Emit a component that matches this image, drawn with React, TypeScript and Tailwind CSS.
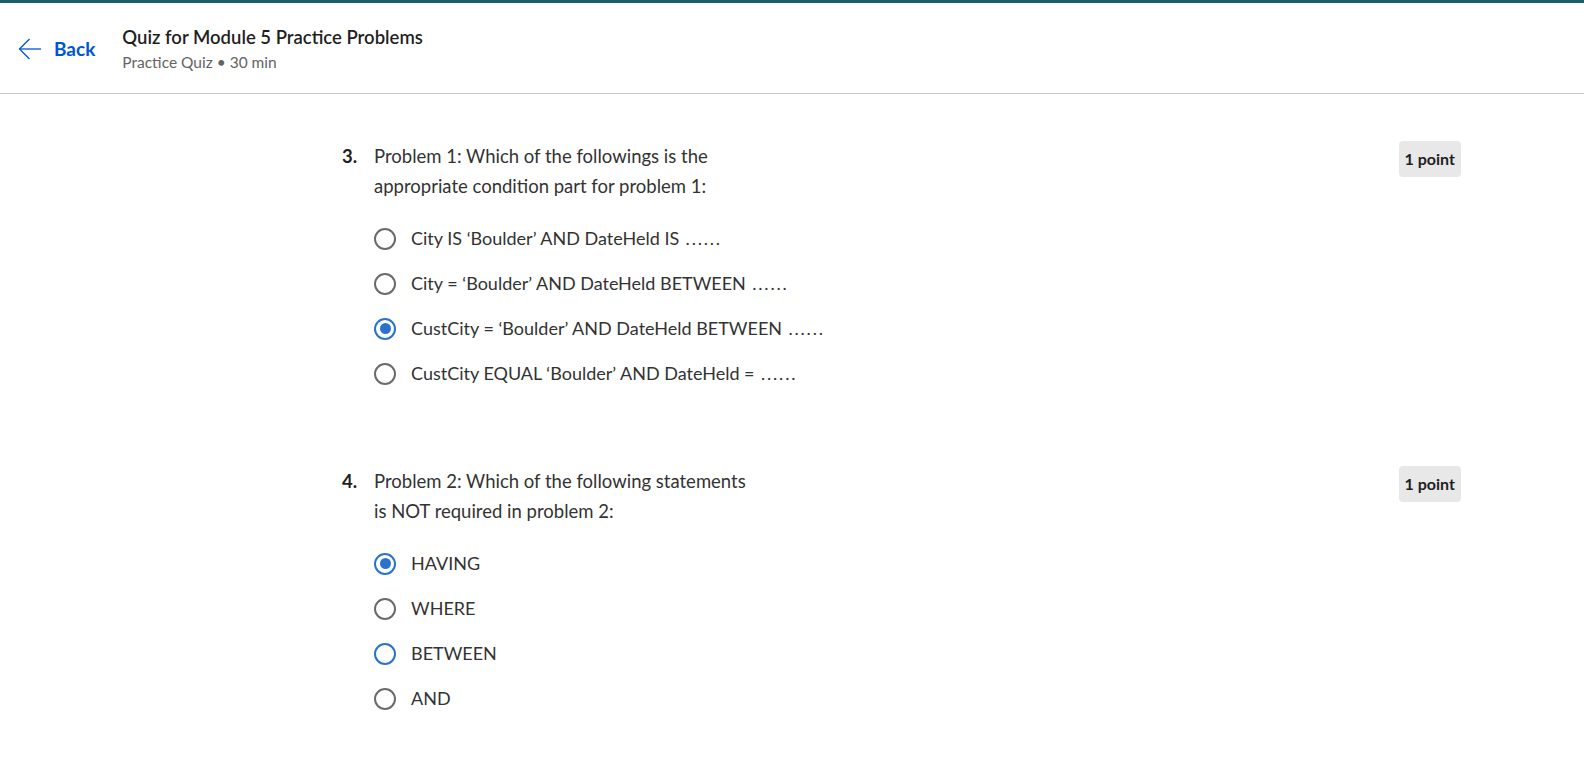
import React from 'react';

const Radio = ({ state }: { state: 'off' | 'on' | 'focus' }) => {
  if (state === 'on') {
    return (
      <span className="w-[22px] h-[22px] rounded-full border-2 border-[#2a73cc] flex items-center justify-center shrink-0">
        <span className="w-[11px] h-[11px] rounded-full bg-[#2a73cc]"></span>
      </span>
    );
  }
  return (
    <span
      className={
        state === 'focus'
          ? 'w-[22px] h-[22px] rounded-full border-2 border-[#2a73cc] shrink-0'
          : 'w-[22px] h-[22px] rounded-full border-2 border-[#6b6b6b] shrink-0'
      }
    ></span>
  );
};

type Opt = { label: string; dots?: boolean; state: 'off' | 'on' | 'focus' };

const Question = ({ number, lines, options }: { number: string; lines: string[]; options: Opt[] }) => (
  <div className="flex justify-between">
    <div>
      <div className="flex text-[18.5px] leading-[30px] text-[#333333]">
        <span className="w-[32px] font-bold text-[#1f1f1f]">{number}</span>
        <p>
          {lines[0]}
          <br />
          {lines[1]}
        </p>
      </div>
      <div className="mt-[15px] pl-[32px]">
        {options.map((opt, i) => (
          <label key={i} className="h-[45px] flex items-center gap-[15px] text-[18px] text-[#333333]">
            <Radio state={opt.state} />
            <span>
              {opt.label}
              {opt.dots && <span className="tracking-[1.8px]"> ......</span>}
            </span>
          </label>
        ))}
      </div>
    </div>
    <div>
      <span className="inline-flex items-center h-[36px] px-[6px] rounded-[4px] bg-[#e8e8e8] text-[16px] font-bold text-[#1f1f1f]">
        1 point
      </span>
    </div>
  </div>
);

export default function App() {
  return (
    <div className="min-h-screen bg-white" style={{ fontFamily: 'Lato, "Open Sans", sans-serif' }}>
      <div className="h-[3px] bg-[#1b5f69]"></div>
      <header className="h-[91px] border-b border-[#c6c6c6] flex items-start">
        <a className="flex items-center gap-[12px] pl-[18px] pt-[34px] text-[#0056d2]">
          <svg width="24" height="24" viewBox="0 0 24 24" fill="none" stroke="currentColor" strokeWidth="1.3">
            <path d="M23 12H1.5" />
            <path d="M11.5 2L1.5 12l10 10" />
          </svg>
          <span className="text-[19px] font-bold leading-[24px]">Back</span>
        </a>
        <div className="pl-[27px] pt-[22px]">
          <h1 className="text-[18.5px] font-semibold leading-[24px] text-[#1f1f1f]">
            Quiz for Module 5 Practice Problems
          </h1>
          <p className="mt-[3px] text-[15.5px] leading-[20px] text-[#636363]">Practice Quiz • 30 min</p>
        </div>
      </header>
      <main className="pl-[342px] pr-[123px] pt-[47px] pb-[60px]">
        <Question
          number="3."
          lines={['Problem 1: Which of the followings is the', 'appropriate condition part for problem 1:']}
          options={[
            { label: 'City IS ‘Boulder’ AND DateHeld IS', dots: true, state: 'off' },
            { label: 'City = ‘Boulder’ AND DateHeld BETWEEN', dots: true, state: 'off' },
            { label: 'CustCity = ‘Boulder’ AND DateHeld BETWEEN', dots: true, state: 'on' },
            { label: 'CustCity EQUAL ‘Boulder’ AND DateHeld =', dots: true, state: 'off' },
          ]}
        />
        <div className="h-[70px]"></div>
        <Question
          number="4."
          lines={['Problem 2: Which of the following statements', 'is NOT required in problem 2:']}
          options={[
            { label: 'HAVING', state: 'on' },
            { label: 'WHERE', state: 'off' },
            { label: 'BETWEEN', state: 'focus' },
            { label: 'AND', state: 'off' },
          ]}
        />
      </main>
    </div>
  );
}
